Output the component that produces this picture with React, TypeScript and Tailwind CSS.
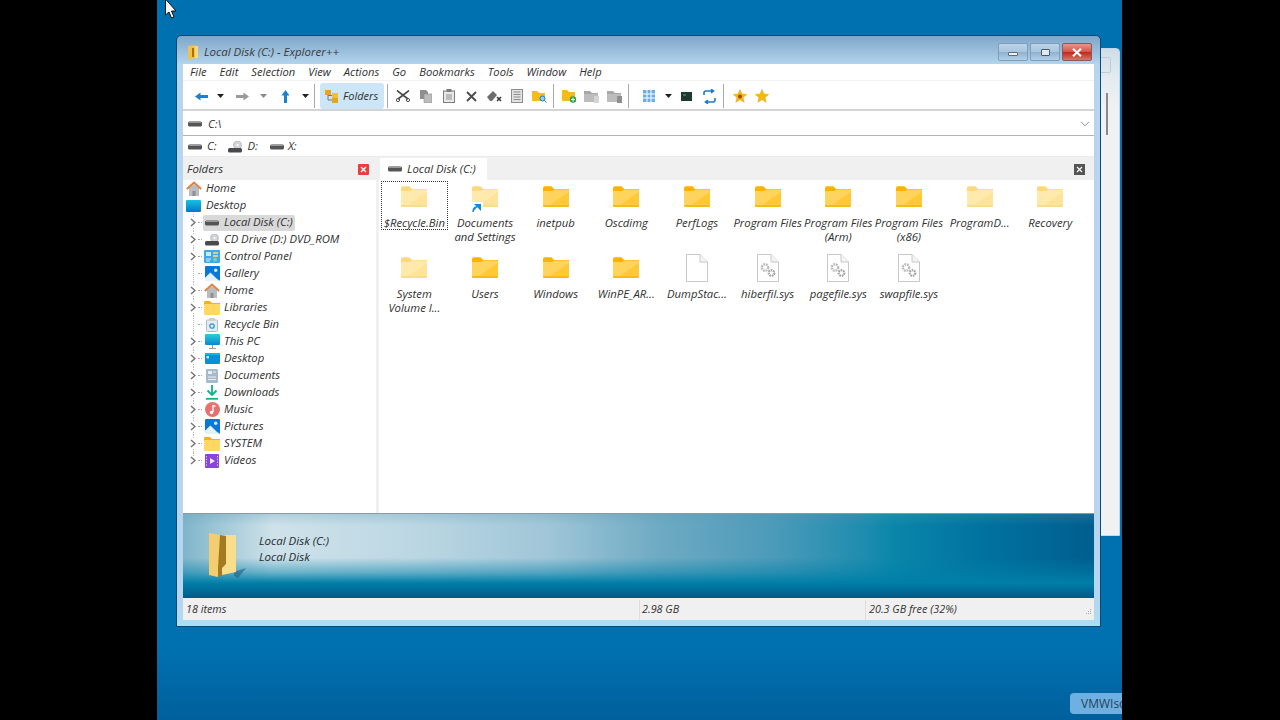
import React from "react";

const Folder = ({ faded = false }: { faded?: boolean }) => (
  <svg width="26" height="21" viewBox="0 0 28 22" className={faded ? "opacity-50" : ""}>
    <path d="M0 2 Q0 0 2 0 H9 L12 3 H28 V5 H0 Z" fill="#fdb200" />
    <path d="M0 5 H10 L12.5 3.5 H27 Q28 3.5 28 5 V21 Q28 22 27 22 H1 Q0 22 0 21 Z" fill="#ffd45c" />
    <path d="M8 20 L28 6 V20 Z" fill="#ffc526" opacity="0.7" />
    <path d="M0 20.5 H28 V21 Q28 22 27 22 H1 Q0 22 0 21 Z" fill="#f2b100" />
  </svg>
);

const Page = ({ gears = false }: { gears?: boolean }) => (
  <svg width="22" height="28" viewBox="0 0 22 28" className="mt-[-3px]">
    <path d="M.5 .5 H14 L21.5 8 V27.5 H.5 Z" fill="#fff" stroke="#c8c8c8" />
    <path d="M14 .5 V8 H21.5" fill="#f4f4f4" stroke="#c8c8c8" />
    {gears && (
      <g fill="none">
        <circle cx="8" cy="13.5" r="3.2" stroke="#bcbcbc" strokeWidth="2.4" strokeDasharray="1.8 .8" />
        <circle cx="14.5" cy="19" r="2.8" stroke="#a2a2a2" strokeWidth="2.2" strokeDasharray="1.6 .8" />
      </g>
    )}
  </svg>
);

const Drive = () => (
  <svg width="14" height="6" viewBox="0 0 14 6" className="shrink-0">
    <rect x="0" y="0.5" width="14" height="5" rx="1.6" fill="#555" />
    <rect x="1" y="0.5" width="12" height="1.5" rx=".6" fill="#999" />
  </svg>
);

const CdDrive = () => (
  <svg width="15" height="12" viewBox="0 0 15 12" className="shrink-0">
    <circle cx="9.5" cy="4" r="4" fill="#d3d6d9" stroke="#a2a7ab" strokeWidth=".6" />
    <circle cx="9.5" cy="4" r="1" fill="#fff" />
    <rect x="0" y="7" width="14" height="4.5" rx="1.5" fill="#4a4a4a" />
  </svg>
);

const HomeIcon = () => (
  <svg width="16" height="15" viewBox="0 0 16 15">
    <path d="M3 7 V15 H13 V7 L8 3 Z" fill="#b9bcc0" />
    <rect x="6.5" y="10" width="3" height="5" fill="#8d9196" />
    <path d="M.8 8 L8 1.5 L15.2 8" fill="none" stroke="#e0813f" strokeWidth="2" />
  </svg>
);

const DesktopIcon = () => (
  <svg width="15" height="12" viewBox="0 0 15 12">
    <defs>
      <linearGradient id="dk" x1="0" y1="0" x2="0" y2="1">
        <stop offset="0" stopColor="#17c3e0" />
        <stop offset="1" stopColor="#0675c9" />
      </linearGradient>
    </defs>
    <rect width="15" height="12" rx="1" fill="url(#dk)" />
  </svg>
);

const ControlPanel = () => (
  <svg width="16" height="13" viewBox="0 0 16 13">
    <rect width="16" height="13" rx="1" fill="#3aaaea" />
    <rect x="2" y="2" width="5" height="4" fill="#cdeafa" />
    <path d="M9 3 H14 M9 6 H14" stroke="#ffdf80" strokeWidth="1.3" />
    <path d="M2 9 H7 M2 11 H6" stroke="#d9f2ff" strokeWidth="1.2" />
    <circle cx="11" cy="9.5" r="2" fill="#7fd0a0" />
  </svg>
);

const PictureIcon = () => (
  <svg width="15" height="15" viewBox="0 0 14 14">
    <rect width="14" height="14" rx="1" fill="#0c78d6" />
    <circle cx="10" cy="4" r="1.6" fill="#cfeafc" />
    <path d="M0 14 V11 L5 6 L11 12 L14 14 Z" fill="#e3f3fd" />
  </svg>
);

const SmallFolder = () => (
  <svg width="16" height="14" viewBox="0 0 16 14">
    <path d="M0 1 Q0 0 1 0 H6 L8 2 H16 V4 H0 Z" fill="#efb31c" />
    <rect x="0" y="3" width="16" height="11" rx="1" fill="#ffd863" />
  </svg>
);

const RecycleIcon = () => (
  <svg width="12" height="14" viewBox="0 0 12 14">
    <rect x=".5" y="2" width="11" height="11.5" rx="1" fill="#e6ebef" stroke="#b3bcc3" />
    <rect x="3" y="0" width="6" height="2" fill="#c8d0d6" />
    <circle cx="6" cy="8" r="2.2" fill="none" stroke="#2c9bd6" strokeWidth="1.3" />
  </svg>
);

const PcIcon = () => (
  <svg width="15" height="15" viewBox="0 0 15 15">
    <defs>
      <linearGradient id="pc" x1="0" y1="0" x2="0" y2="1">
        <stop offset="0" stopColor="#26d0d8" />
        <stop offset="1" stopColor="#0a86d0" />
      </linearGradient>
    </defs>
    <rect width="15" height="11" rx="1" fill="url(#pc)" />
    <path d="M7.5 11 V14 M4 14.4 H11" stroke="#8b97a0" />
  </svg>
);

const DesktopTile = () => (
  <svg width="15" height="11" viewBox="0 0 15 11">
    <rect width="15" height="11" rx="1" fill="#0b8fd4" />
    <rect y="0" width="15" height="2" fill="#14b5e0" />
    <rect x="1.5" y="3" width="2.5" height="2.5" fill="#b6ecff" />
  </svg>
);

const DocsIcon = () => (
  <svg width="12" height="14" viewBox="0 0 12 14">
    <rect width="12" height="14" rx="1" fill="#a7bacc" />
    <rect x="2" y="2" width="4" height="3" fill="#e8eef3" />
    <path d="M7 3 H10 M2 8 H10 M2 10.5 H10" stroke="#e8eef3" />
  </svg>
);

const DownloadIcon = () => (
  <svg width="14" height="15" viewBox="0 0 14 15">
    <path d="M7 0 V9.5 M2.5 5.5 L7 10 L11.5 5.5" fill="none" stroke="#0ab48a" strokeWidth="1.8" />
    <path d="M1 13.8 H13" stroke="#0ab48a" strokeWidth="1.8" />
  </svg>
);

const MusicIcon = () => (
  <svg width="15" height="15" viewBox="0 0 15 15">
    <circle cx="7.5" cy="7.5" r="7.5" fill="#e8706e" />
    <path d="M8 3 V10" stroke="#fff" strokeWidth="1.4" />
    <circle cx="6.5" cy="10.5" r="1.7" fill="#fff" />
    <path d="M8 3 L10.5 4.5" stroke="#fff" strokeWidth="1.2" />
  </svg>
);

const VideoIcon = () => (
  <svg width="14" height="14" viewBox="0 0 14 14">
    <rect width="14" height="14" rx="1" fill="#8a44dc" />
    <path d="M5 4 L10 7 L5 10 Z" fill="#f3e9ff" />
    <path d="M1.5 2 V12 M12.5 2 V12" stroke="#d9c2f7" strokeDasharray="1.4 1.4" />
  </svg>
);

const Caret = ({ muted = false }: { muted?: boolean }) => (
  <svg width="7" height="4" viewBox="0 0 7 4" className="shrink-0">
    <path d="M0 0 H7 L3.5 4 Z" fill={muted ? "#8a8a8a" : "#222"} />
  </svg>
);

const Sep = () => <div className="h-[24px] w-px shrink-0 bg-[#a9a9a9]" />;

const Slot = ({ w, children }: { w: string; children?: React.ReactNode }) => (
  <div className={`flex h-full shrink-0 items-center justify-center ${w}`}>{children}</div>
);

const Arrow = ({ color, dir }: { color: string; dir: "l" | "r" | "u" }) => (
  <svg width="13" height="13" viewBox="0 0 13 13">
    {dir === "l" && <path d="M0 6.5 L5.5 2.5 V5 H13 V8 H5.5 V10.5 Z" fill={color} />}
    {dir === "r" && <path d="M13 6.5 L7.5 2.5 V5 H0 V8 H7.5 V10.5 Z" fill={color} />}
    {dir === "u" && <path d="M6.5 0 L10.5 5.5 H8 V13 H5 V5.5 H2.5 Z" fill={color} />}
  </svg>
);

const GreyFolder = ({ badge }: { badge: string }) => (
  <svg width="15" height="13" viewBox="0 0 15 13">
    <path d="M0 1 H6 L8 3 H14 V12 H0 Z" fill="#a8a8a8" />
    <path d="M0 4 H14 V12 H0 Z" fill="#bdbdbd" />
    <rect x="10" y="6" width="5" height="7" fill={badge} />
  </svg>
);

const Star = ({ dot = false }: { dot?: boolean }) => (
  <svg width="14" height="14" viewBox="0 0 14 14" className="shrink-0">
    <path d="M7 .5 L9 5 L13.7 5.4 L10.1 8.5 L11.2 13.3 L7 10.8 L2.8 13.3 L3.9 8.5 L.3 5.4 L5 5 Z" fill="#f6b80f" stroke="#d99a06" strokeWidth=".4" />
    {dot && <circle cx="7" cy="7.4" r="2" fill="#a8460d" />}
  </svg>
);

function Toolbar() {
  return (
    <div className="flex h-[30px] shrink-0 items-center border-b-2 border-[#d4d4d4] bg-white pl-[7px] pt-[2px]">
      <Slot w="w-[22px]"><Arrow color="#1c7fd0" dir="l" /></Slot>
      <Slot w="w-[16px]"><Caret /></Slot>
      <Slot w="w-[28px]"><Arrow color="#9a9a9a" dir="r" /></Slot>
      <Slot w="w-[14px]"><Caret muted /></Slot>
      <Slot w="w-[30px]"><Arrow color="#1c7fd0" dir="u" /></Slot>
      <Slot w="w-[10px]"><Caret /></Slot>
      <div className="ml-[4px]"><Sep /></div>
      <div className="ml-[5px] flex h-[26px] w-[64px] shrink-0 items-center gap-[4px] rounded-[3px] bg-[#cde6f7] pl-[5px]">
        <svg width="14" height="14" viewBox="0 0 14 14">
          <rect x="0" y="1" width="6" height="5" fill="#e0a820" />
          <rect x="7" y="4" width="6" height="5" fill="#f0bf3a" />
          <rect x="7" y="9" width="6" height="5" fill="#e0a820" />
          <path d="M3 6 V11 H7 M3 6.5 H7" fill="none" stroke="#777" />
        </svg>
        <span className="text-[11px]">Folders</span>
      </div>
      <div className="ml-[3px] mr-[4px]"><Sep /></div>
      <Slot w="w-[22.75px]">
        <svg width="14" height="12" viewBox="0 0 14 12">
          <path d="M1 .5 L12 9 M13 .5 L2 9" stroke="#4a4a4a" strokeWidth="1.6" />
          <circle cx="2" cy="10" r="1.6" fill="none" stroke="#4a4a4a" />
          <circle cx="12" cy="10" r="1.6" fill="none" stroke="#4a4a4a" />
        </svg>
      </Slot>
      <Slot w="w-[22.75px]">
        <svg width="12" height="13" viewBox="0 0 12 13">
          <path d="M0 0 H6 L8 2 V9 H0 Z" fill="#8f8f8f" />
          <path d="M4 4 H12 V13 H4 Z" fill="#bcbcbc" stroke="#8f8f8f" strokeWidth=".6" />
        </svg>
      </Slot>
      <Slot w="w-[22.75px]">
        <svg width="12" height="14" viewBox="0 0 12 14">
          <rect x=".5" y="2" width="11" height="11.5" fill="#e8e8e8" stroke="#7d7d7d" />
          <rect x="3.5" y="0" width="5" height="3" fill="#7d7d7d" />
          <path d="M3 6 H9 M3 8 H9 M3 10 H9" stroke="#8f8f8f" />
        </svg>
      </Slot>
      <Slot w="w-[22.75px]">
        <svg width="11" height="11" viewBox="0 0 11 11">
          <path d="M1 1 L10 10 M10 1 L1 10" stroke="#4a4a4a" strokeWidth="1.8" />
        </svg>
      </Slot>
      <Slot w="w-[22.75px]">
        <svg width="15" height="13" viewBox="0 0 15 13">
          <path d="M0 7 L6 1 L10 5 L5 11 H3 Z" fill="#6d6d6d" />
          <path d="M10 7 L14 11 M14 7 L10 11" stroke="#333" strokeWidth="1.5" />
        </svg>
      </Slot>
      <Slot w="w-[22.75px]">
        <svg width="12" height="14" viewBox="0 0 12 14">
          <rect x=".5" y=".5" width="11" height="13" fill="#e3e3e3" stroke="#8d8d8d" />
          <path d="M2.5 3 H9.5 M2.5 5.5 H9.5 M2.5 8 H9.5 M2.5 10.5 H9.5" stroke="#8d8d8d" />
        </svg>
      </Slot>
      <Slot w="w-[22.75px]">
        <svg width="15" height="14" viewBox="0 0 15 14">
          <path d="M0 2 H5 L7 4 H13 V12 H0 Z" fill="#f3bb1b" />
          <circle cx="10.5" cy="9.5" r="2.5" fill="#8fd0f2" stroke="#1c7fc0" />
          <path d="M12.5 11.5 L14.5 13.5" stroke="#1c7fc0" />
        </svg>
      </Slot>
      <div className="ml-[1.5px] mr-[4px]"><Sep /></div>
      <Slot w="w-[22.75px]">
        <svg width="15" height="14" viewBox="0 0 15 14">
          <path d="M0 1 H5 L7 3 H13 V12 H0 Z" fill="#f3bb1b" />
          <circle cx="11" cy="10.5" r="3.2" fill="#27a34f" />
          <path d="M11 8.5 V12.5 M9 10.5 H13" stroke="#fff" />
        </svg>
      </Slot>
      <Slot w="w-[22.75px]"><GreyFolder badge="#d5d5d5" /></Slot>
      <Slot w="w-[22.75px]"><GreyFolder badge="#8f8f8f" /></Slot>
      <div className="ml-[1.75px] mr-[9px]"><Sep /></div>
      <Slot w="w-[22px]">
        <svg width="12" height="12" viewBox="0 0 12 12">
          <path d="M0 0 H12 V12 H0 Z" fill="#6aaee6" />
          <path d="M4 0 V12 M8 0 V12 M0 4 H12 M0 8 H12" stroke="#fff" />
        </svg>
      </Slot>
      <Slot w="w-[18px]"><Caret /></Slot>
      <Slot w="w-[18px]">
        <svg width="11" height="9" viewBox="0 0 11 9">
          <rect width="11" height="9" fill="#1e3a33" />
          <path d="M2 3 H5" stroke="#5fae7a" />
        </svg>
      </Slot>
      <Slot w="w-[27px]">
        <svg width="13" height="15" viewBox="0 0 13 15">
          <path d="M1 6 V4 Q1 2 3 2 H10 M8 .2 L10.5 2 L8 3.8 M12 9 V11 Q12 13 10 13 H3 M5 11.2 L2.5 13 L5 14.8" fill="none" stroke="#1f7cc4" strokeWidth="1.6" />
        </svg>
      </Slot>
      <Sep />
      <Slot w="w-[32px]"><Star dot /></Slot>
      <Slot w="w-[12px]"><Star /></Slot>
    </div>
  );
}

const tree: [React.ReactNode, string][] = [
  [<Drive />, "Local Disk (C:)"],
  [<CdDrive />, "CD Drive (D:) DVD_ROM"],
  [<ControlPanel />, "Control Panel"],
  [<PictureIcon />, "Gallery"],
  [<HomeIcon />, "Home"],
  [<SmallFolder />, "Libraries"],
  [<RecycleIcon />, "Recycle Bin"],
  [<PcIcon />, "This PC"],
  [<DesktopTile />, "Desktop"],
  [<DocsIcon />, "Documents"],
  [<DownloadIcon />, "Downloads"],
  [<MusicIcon />, "Music"],
  [<PictureIcon />, "Pictures"],
  [<SmallFolder />, "SYSTEM"],
  [<VideoIcon />, "Videos"],
];

const noChevron = ["Gallery", "Recycle Bin"];

function TreeRow({ icon, label, last }: { icon: React.ReactNode; label: string; last: boolean }) {
  const selected = label === "Local Disk (C:)";
  return (
    <div className="flex h-[17px] items-center pl-[6px]">
      <div className="relative flex h-full w-[8px] items-center justify-center">
        <div className={`absolute left-[3.5px] top-0 border-l border-dotted border-[#bbb] ${last ? "h-[8px]" : "h-[17px]"}`} />
        {!noChevron.includes(label) && (
          <svg width="6" height="9" viewBox="0 0 6 9" className="relative bg-white">
            <path d="M1 1 L5 4.5 L1 8" fill="none" stroke="#6f6f6f" strokeWidth="1.3" />
          </svg>
        )}
      </div>
      <div className="ml-[1px] w-[4px] border-t border-dotted border-[#aaa]" />
      <div className={`ml-[1px] flex h-[16px] items-center ${selected ? "rounded-[2px] bg-[#d9d9d9] pr-[2px]" : ""}`}>
        <div className="flex w-[21px] justify-center pr-[3px]">{icon}</div>
        <span>{label}</span>
      </div>
    </div>
  );
}

const items: { name: string; kind: "f" | "h" | "s" | "d" | "g" }[] = [
  { name: "$Recycle.Bin", kind: "h" },
  { name: "Documents and Settings", kind: "s" },
  { name: "inetpub", kind: "f" },
  { name: "Oscdimg", kind: "f" },
  { name: "PerfLogs", kind: "f" },
  { name: "Program Files", kind: "f" },
  { name: "Program Files (Arm)", kind: "f" },
  { name: "Program Files (x86)", kind: "f" },
  { name: "ProgramD...", kind: "h" },
  { name: "Recovery", kind: "h" },
  { name: "System Volume I...", kind: "h" },
  { name: "Users", kind: "f" },
  { name: "Windows", kind: "f" },
  { name: "WinPE_AR...", kind: "f" },
  { name: "DumpStac...", kind: "d" },
  { name: "hiberfil.sys", kind: "g" },
  { name: "pagefile.sys", kind: "g" },
  { name: "swapfile.sys", kind: "g" },
];

function FileItem({ name, kind }: { name: string; kind: string }) {
  return (
    <div className="relative flex h-[70.6px] flex-col items-center pt-[6px]">
      {name === "$Recycle.Bin" && (
        <div className="absolute left-[2px] top-[1px] h-[49px] w-[67px] border border-dotted border-[#333]" />
      )}
      <div className="relative flex h-[32px] items-start justify-center">
        {kind === "f" && <Folder />}
        {(kind === "h" || kind === "s") && <Folder faded />}
        {kind === "d" && <Page />}
        {kind === "g" && <Page gears />}
        {kind === "s" && (
          <div className="absolute left-[-1px] top-[16px] flex h-[12px] w-[12px] items-center justify-center bg-white">
            <svg width="9" height="9" viewBox="0 0 9 9">
              <path d="M1 8 Q1 3 5 3 M3.5 .5 H8.5 V5.5 Z" fill="#1c86d4" stroke="#1c86d4" strokeWidth="1.4" />
            </svg>
          </div>
        )}
      </div>
      <div className="mt-[-2px] w-[70px] text-center leading-[14px]">{name}</div>
    </div>
  );
}

export default function App() {
  return (
    <div className="relative h-[720px] w-[1280px] overflow-hidden bg-black font-['Open_Sans',sans-serif] text-[11.3px] italic text-[#303030]">
      <div className="absolute left-[157px] top-0 h-[720px] w-[965px] bg-[linear-gradient(to_bottom,#0071b0_0%,#0071b0_90%,#00609c_100%)]" />

      {/* window behind */}
      <div className="absolute left-[1090px] top-[48px] h-[488px] w-[30px] rounded-tr-[4px] border border-[#c3d7e6] bg-[linear-gradient(to_bottom,#cfdde8_0%,#e4ebf1_6%,#eff1f3_12%,#eff1f3_100%)]">
        <div className="absolute left-[9px] top-[8px] h-[16px] w-[11px] rounded-r-[2px] border border-[#c4ccd3]" />
        <div className="absolute left-[15px] top-[44px] h-[42px] w-[2px] bg-[#8a8a8a]" />
      </div>

      {/* cursor */}
      <svg width="13" height="19" viewBox="0 0 13 19" className="absolute left-[165px] top-0 z-10">
        <path d="M.5 -1 V15 L4 12 L6.5 18 L9 17 L6.5 11 H11 Z" fill="#fff" stroke="#000" strokeWidth=".9" />
      </svg>

      {/* main window */}
      <div className="absolute left-[176px] top-[35px] flex h-[592px] w-[925px] flex-col rounded-t-[5px] border border-[#0a4a75] bg-[linear-gradient(to_bottom,#7fa6c9_0%,#b5d6ee_5%,#b5d6ee_97%,#a8e0f5_100%)] pb-[6px] pl-[6px] pr-[6px]">
        <div className="flex h-[28px] shrink-0 items-center">
          <svg width="12" height="15" viewBox="0 0 12 15" className="ml-[4px] mt-[4px]">
            <path d="M1 1 L8 0 V13 L1 15 Z" fill="#efc24a" />
            <path d="M8 1 H11 V13 H8 Z" fill="#f7d979" />
            <path d="M5 3 H7 V12 H5 Z" fill="#a8730c" />
          </svg>
          <span className="ml-[5px] mt-[4px] text-[11.5px] text-[#3a3a3a]">Local Disk (C:) - Explorer++</span>
          <div className="ml-auto flex items-center gap-[2px] pr-[2px] pt-[4px]">
            <div className="flex h-[18px] w-[30px] items-center justify-center rounded-[2px] border border-[#7d9dbb] bg-[linear-gradient(to_bottom,#bdd3e8_0%,#a9c6e0_48%,#8fb2d1_52%,#b4d0e7_100%)] pt-[4px]">
              <div className="h-[4px] w-[10px] rounded-[1px] border border-[#5c6b78] bg-[#eef3f8]" />
            </div>
            <div className="flex h-[18px] w-[30px] items-center justify-center rounded-[2px] border border-[#7d9dbb] bg-[linear-gradient(to_bottom,#bdd3e8_0%,#a9c6e0_48%,#8fb2d1_52%,#b4d0e7_100%)]">
              <div className="h-[7px] w-[9px] rounded-[1px] border border-[#4c5a66] bg-[#dfe9f2]" />
            </div>
            <div className="flex h-[18px] w-[30px] items-center justify-center rounded-[2px] border border-[#8a5a58] bg-[linear-gradient(to_bottom,#e8958a_0%,#d4574a_48%,#c0281c_52%,#d9776a_100%)]">
              <svg width="10" height="9" viewBox="0 0 10 9">
                <path d="M1 .8 L9 8.2 M9 .8 L1 8.2" stroke="#fff" strokeWidth="2.2" />
              </svg>
            </div>
          </div>
        </div>

        <div className="flex min-h-0 flex-1 flex-col bg-white">
          <div className="flex h-[17px] shrink-0 items-center gap-[13px] border-b border-[#f2f2f2] pl-[7px] pt-[1px] text-[11.2px]">
            {["File", "Edit", "Selection", "View", "Actions", "Go", "Bookmarks", "Tools", "Window", "Help"].map((m) => (
              <span key={m}>{m}</span>
            ))}
          </div>
          <Toolbar />
          <div className="flex h-[25px] shrink-0 items-center border-b border-[#b4b4b4] pl-[5px] pr-[4px] pt-[2px]">
            <Drive />
            <span className="ml-[6px]">C:\</span>
            <svg width="10" height="6" viewBox="0 0 10 6" className="ml-auto">
              <path d="M1 .8 L5 4.8 L9 .8" fill="none" stroke="#8a8a8a" />
            </svg>
          </div>
          <div className="flex h-[21px] shrink-0 items-center border-b border-[#ececec] pl-[5px] pt-[1px]">
            <Drive /><span className="ml-[5px]">C:</span>
            <div className="ml-[12px]"><CdDrive /></div><span className="ml-[4px]">D:</span>
            <div className="ml-[12px]"><Drive /></div><span className="ml-[4px]">X:</span>
          </div>

          <div className="flex min-h-0 flex-1">
            <div className="flex w-[193px] shrink-0 flex-col">
              <div className="flex h-[23px] shrink-0 items-center justify-between bg-[#f0f0f0] pl-[4px] pr-[7px] pt-[1px]">
                <span>Folders</span>
                <div className="flex h-[11px] w-[11px] items-center justify-center rounded-[1px] bg-[#ef3b3f]">
                  <svg width="7" height="7" viewBox="0 0 7 7">
                    <path d="M1 1 L6 6 M6 1 L1 6" stroke="#fff" strokeWidth="1.3" />
                  </svg>
                </div>
              </div>
              <div>
                <div className="flex h-[17px] items-center pl-[3px]">
                  <div className="w-[20px]"><HomeIcon /></div><span>Home</span>
                </div>
                <div className="flex h-[17px] items-center pl-[3px]">
                  <div className="w-[20px]"><DesktopIcon /></div><span>Desktop</span>
                </div>
                {tree.map(([icon, label], i) => (
                  <TreeRow key={label + i} icon={icon} label={label} last={i === tree.length - 1} />
                ))}
              </div>
            </div>
            <div className="w-[3px] shrink-0 bg-[#f0f0f0]" />
            <div className="flex min-w-0 flex-1 flex-col">
              <div className="flex h-[23px] shrink-0 items-end justify-between bg-[#f0f0f0] pr-[9px]">
                <div className="ml-[1px] flex h-[22px] w-[107px] items-center gap-[5px] bg-white pl-[8px]">
                  <Drive /><span>Local Disk (C:)</span>
                </div>
                <div className="mb-[5px] flex h-[11px] w-[11px] items-center justify-center bg-[#555]">
                  <svg width="7" height="7" viewBox="0 0 7 7">
                    <path d="M1 1 L6 6 M6 1 L1 6" stroke="#fff" strokeWidth="1.2" />
                  </svg>
                </div>
              </div>
              <div className="grid grid-cols-[repeat(10,70.67px)] content-start">
                {items.map((it) => (
                  <FileItem key={it.name} name={it.name} kind={it.kind} />
                ))}
              </div>
            </div>
          </div>

          {/* display window */}
          <div className="relative flex h-[85px] shrink-0 border-t border-[#8a9aa3] bg-[linear-gradient(to_right,#7fb5ca_0%,#cfe2ea_10%,#bcd7e3_25%,#a0c6d8_40%,#6fabc3_52%,#4b9ab9_65%,#1d8cae_75%,#0a86a9_78%,#0072a0_88%,#005e8e_100%)]">
            <div className="absolute inset-0 bg-[linear-gradient(to_bottom,#5a9ab540_0%,transparent_14%,transparent_52%,#0080a880_70%,#007fa8_82%,#00598a_100%)]" />
            <svg width="42" height="50" viewBox="0 0 42 50" className="relative ml-[25px] mt-[18px]">
              <path d="M26 40 L38 36 L30 46 L26 44 Z" fill="#1b5f80" opacity=".6" />
              <path d="M1 1 L18 4 V42 L10 40 V45 L1 43 Z" fill="#f3cd6e" />
              <path d="M14 3 H28 V40 L14 43 Z" fill="#f8dd8a" />
              <path d="M12 3 L18 4 V32 L14 36 V43 L10 45 V36 Z" fill="#a37a20" />
            </svg>
            <div className="relative ml-[9px] mt-[20px] flex flex-col gap-[2px] text-[11.5px] leading-[14px] text-[#1d2a30]">
              <span>Local Disk (C:)</span>
              <span>Local Disk</span>
            </div>
          </div>

          <div className="flex h-[22px] shrink-0 items-center bg-[#f0f0f0] pt-[1px] text-[10.8px]">
            <div className="w-[456px] pl-[3px]">18 items</div>
            <div className="h-[20px] w-px bg-[#dedede]" />
            <div className="w-[225px] pl-[2px]">2.98 GB</div>
            <div className="h-[20px] w-px bg-[#dedede]" />
            <div className="flex-1 pl-[3px]">20.3 GB free (32%)</div>
            <svg width="8" height="8" viewBox="0 0 8 8" className="mr-[2px] mt-[7px]">
              <path d="M6 0 h1 v1 h-1 Z M4 2 h1 v1 h-1 Z M6 2 h1 v1 h-1 Z M2 4 h1 v1 h-1 Z M4 4 h1 v1 h-1 Z M6 4 h1 v1 h-1 Z" fill="#aaa" />
            </svg>
          </div>
        </div>
      </div>

      {/* tooltip */}
      <div className="absolute left-[1070px] top-[693px] h-[21px] w-[52px] overflow-hidden rounded-l-[4px] bg-[#6fb0e2] pl-[11px] text-[12px] not-italic leading-[21px] text-[#24425a]">
        VMWIso
      </div>
    </div>
  );
}
